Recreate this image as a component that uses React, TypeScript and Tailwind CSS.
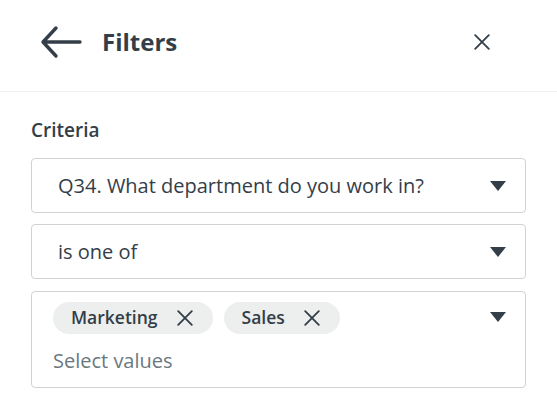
import React from "react";

const Caret = () => (
  <svg width="16" height="10" viewBox="0 0 16 10" className="shrink-0">
    <path d="M0 0 H16 L8 10 Z" fill="#333e48" />
  </svg>
);

const SmallX = ({ size = 16 }: { size?: number }) => (
  <svg width={size} height={size} viewBox="0 0 16 16" className="shrink-0">
    <path d="M1.2 1.2 L14.8 14.8 M14.8 1.2 L1.2 14.8" stroke="#333e48" strokeWidth="1.8" strokeLinecap="round" />
  </svg>
);

const Chip = ({ label }: { label: string }) => (
  <div className="flex items-center h-[32px] rounded-full bg-[#edeeee] pl-[18px] pr-[20px] gap-[19px]">
    <span className="text-[17.5px] font-semibold text-[#333e48] leading-none">{label}</span>
    <SmallX size={16} />
  </div>
);

export default function App() {
  return (
    <div className="w-[557px] h-[400px] bg-white overflow-hidden" style={{ fontFamily: '"Open Sans", "Liberation Sans", sans-serif' }}>
      <div className="h-[92px] flex items-center pb-[7px] pl-[40px] pr-[67px] border-b border-[#efefef]">
        <svg width="42" height="34" viewBox="0 0 42 34" className="shrink-0">
          <path d="M40 17 H3 M16 3 L3 17 L16 31" stroke="#333e48" strokeWidth="3.4" strokeLinecap="round" strokeLinejoin="round" fill="none" />
        </svg>
        <span className="ml-[20px] text-[24px] font-bold text-[#333e48] leading-none">Filters</span>
        <div className="flex-1" />
        <SmallX size={16} />
      </div>
      <div className="px-[31px] pt-[29px]">
        <div className="text-[19px] font-semibold text-[#333e48] leading-none">Criteria</div>
        <div className="mt-[18px] flex flex-col">
          <div className="h-[55px] rounded-[4px] border border-[#d0d2d3] flex items-center pl-[26px] pr-[19px]">
            <span className="flex-1 text-[20px] text-[#333e48]">Q34. What department do you work in?</span>
            <Caret />
          </div>
          <div className="mt-[11px] h-[55px] rounded-[4px] border border-[#d0d2d3] flex items-center pl-[26px] pr-[19px]">
            <span className="flex-1 text-[20px] text-[#333e48]">is one of</span>
            <Caret />
          </div>
          <div className="mt-[12px] h-[97px] rounded-[4px] border border-[#d0d2d3] flex pl-[21px] pr-[19px] pt-[10px]">
            <div className="flex-1 flex flex-col">
              <div className="flex gap-[11px]">
                <Chip label="Marketing" />
                <Chip label="Sales" />
              </div>
              <span className="mt-[13px] text-[20px] text-[#6b787f] leading-[28px]">Select values</span>
            </div>
            <div className="pt-[10px]">
              <Caret />
            </div>
          </div>
        </div>
      </div>
    </div>
  );
}
